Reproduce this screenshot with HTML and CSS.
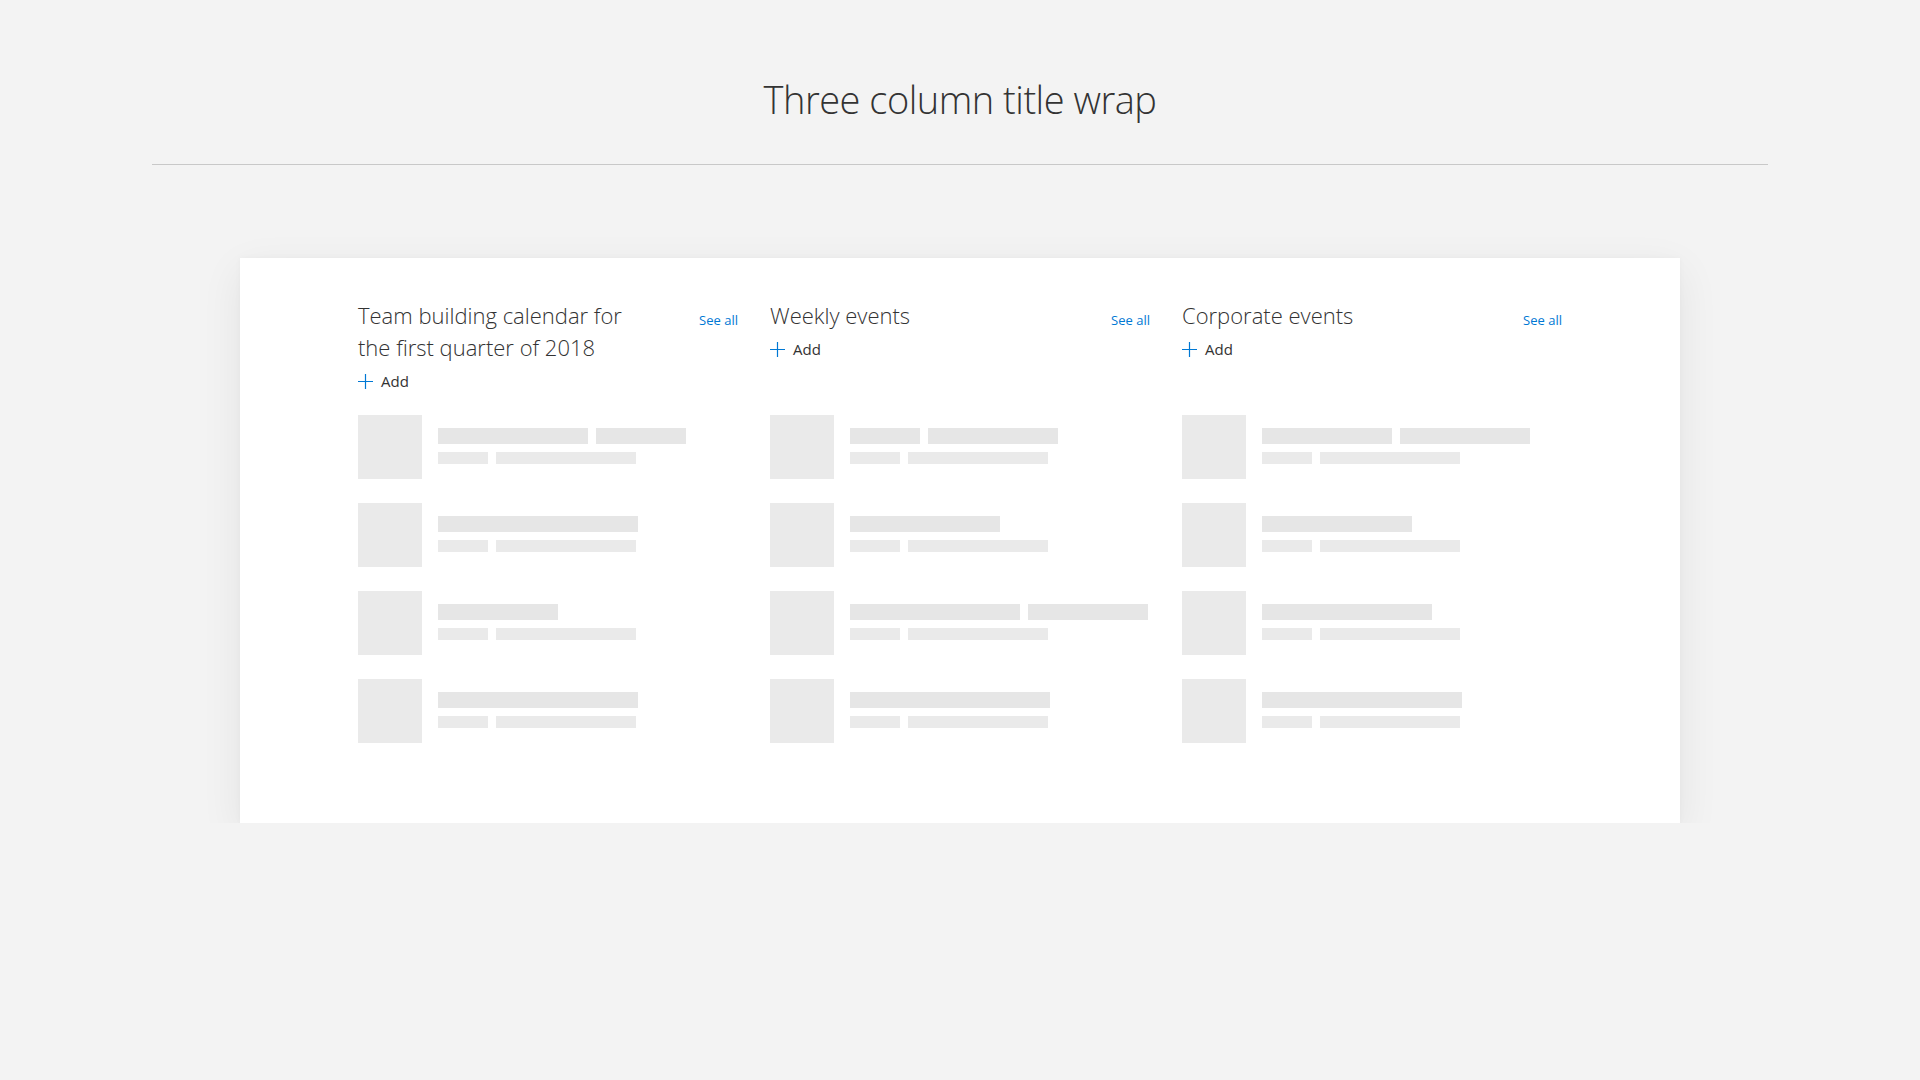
FILE: index.html
```html
<!DOCTYPE html>
<html lang="en">
<head>
<meta charset="utf-8">
<title>Three column title wrap</title>
<link rel="stylesheet" href="styles.css">
</head>
<body>
<div class="page">
  <header class="page-header">
    <h1 class="page-title">Three column title wrap</h1>
  </header>

  <section class="card">
    <div class="col-head">
      <div class="col-title-row">
        <h2 class="col-title">Team building calendar for the first quarter of 2018</h2>
        <a class="see-all" href="#">See all</a>
      </div>
      <button class="add-btn" type="button">
        <svg class="plus" width="15" height="15" viewBox="0 0 15 15"><path d="M7.5 0V15M0 7.5H15" stroke="#0078d4" stroke-width="1.2" fill="none"/></svg>
        <span>Add</span>
      </button>
    </div>
    <div class="col-head">
      <div class="col-title-row">
        <h2 class="col-title">Weekly events</h2>
        <a class="see-all" href="#">See all</a>
      </div>
      <button class="add-btn" type="button">
        <svg class="plus" width="15" height="15" viewBox="0 0 15 15"><path d="M7.5 0V15M0 7.5H15" stroke="#0078d4" stroke-width="1.2" fill="none"/></svg>
        <span>Add</span>
      </button>
    </div>
    <div class="col-head">
      <div class="col-title-row">
        <h2 class="col-title">Corporate events</h2>
        <a class="see-all" href="#">See all</a>
      </div>
      <button class="add-btn" type="button">
        <svg class="plus" width="15" height="15" viewBox="0 0 15 15"><path d="M7.5 0V15M0 7.5H15" stroke="#0078d4" stroke-width="1.2" fill="none"/></svg>
        <span>Add</span>
      </button>
    </div>

    <ul class="items">
      <li class="item"><div class="thumb"></div><div class="lines"><div class="line l1"><i style="width:150px"></i><i style="width:90px"></i></div><div class="line l2"><i style="width:50px"></i><i style="width:140px"></i></div></div></li>
      <li class="item"><div class="thumb"></div><div class="lines"><div class="line l1"><i style="width:200px"></i></div><div class="line l2"><i style="width:50px"></i><i style="width:140px"></i></div></div></li>
      <li class="item"><div class="thumb"></div><div class="lines"><div class="line l1"><i style="width:120px"></i></div><div class="line l2"><i style="width:50px"></i><i style="width:140px"></i></div></div></li>
      <li class="item"><div class="thumb"></div><div class="lines"><div class="line l1"><i style="width:200px"></i></div><div class="line l2"><i style="width:50px"></i><i style="width:140px"></i></div></div></li>
    </ul>
    <ul class="items">
      <li class="item"><div class="thumb"></div><div class="lines"><div class="line l1"><i style="width:70px"></i><i style="width:130px"></i></div><div class="line l2"><i style="width:50px"></i><i style="width:140px"></i></div></div></li>
      <li class="item"><div class="thumb"></div><div class="lines"><div class="line l1"><i style="width:150px"></i></div><div class="line l2"><i style="width:50px"></i><i style="width:140px"></i></div></div></li>
      <li class="item"><div class="thumb"></div><div class="lines"><div class="line l1"><i style="width:170px"></i><i style="width:120px"></i></div><div class="line l2"><i style="width:50px"></i><i style="width:140px"></i></div></div></li>
      <li class="item"><div class="thumb"></div><div class="lines"><div class="line l1"><i style="width:200px"></i></div><div class="line l2"><i style="width:50px"></i><i style="width:140px"></i></div></div></li>
    </ul>
    <ul class="items">
      <li class="item"><div class="thumb"></div><div class="lines"><div class="line l1"><i style="width:130px"></i><i style="width:130px"></i></div><div class="line l2"><i style="width:50px"></i><i style="width:140px"></i></div></div></li>
      <li class="item"><div class="thumb"></div><div class="lines"><div class="line l1"><i style="width:150px"></i></div><div class="line l2"><i style="width:50px"></i><i style="width:140px"></i></div></div></li>
      <li class="item"><div class="thumb"></div><div class="lines"><div class="line l1"><i style="width:170px"></i></div><div class="line l2"><i style="width:50px"></i><i style="width:140px"></i></div></div></li>
      <li class="item"><div class="thumb"></div><div class="lines"><div class="line l1"><i style="width:200px"></i></div><div class="line l2"><i style="width:50px"></i><i style="width:140px"></i></div></div></li>
    </ul>
  </section>
</div>
</body>
</html>
```

FILE: styles.css
```css
* { box-sizing: border-box; }
html, body { margin: 0; padding: 0; }
body {
  background: #f3f3f3;
  font-family: "Open Sans", "Noto Sans", "Liberation Sans", sans-serif;
  color: #333333;
}
.page { width: 1616px; margin: 0 auto; }
.page-header {
  padding-top: 71px;
  padding-bottom: 37px;
  border-bottom: 1px solid #c8c8c8;
  text-align: center;
}
.page-title {
  margin: 0;
  font-size: 38px;
  letter-spacing: -0.5px;
  font-weight: 300;
  line-height: 56px;
  color: #333333;
}
.card {
  width: 1440px;
  margin: 93px auto 0;
  background: #ffffff;
  padding: 41px 118px 80px;
  display: grid;
  grid-template-columns: repeat(3, 380px);
  column-gap: 32px;
  box-shadow: 0 0 6px rgba(0,0,0,0.03), 0 12px 40px rgba(0,0,0,0.07);
}
.col-head { display: flex; flex-direction: column; align-items: flex-start; }
.col-title-row { display: flex; width: 100%; align-items: flex-start; justify-content: space-between; }
.col-title {
  margin: 0;
  width: 290px;
  font-size: 22px;
  font-weight: 300;
  line-height: 32px;
  color: #333333;
}
.see-all {
  margin-top: 11px;
  font-size: 13px;
  line-height: 20px;
  color: #0078d4;
  text-decoration: none;
}
.add-btn {
  display: flex;
  align-items: center;
  gap: 8px;
  padding: 0;
  border: 0;
  background: none;
  height: 36px;
  font-family: inherit;
  font-size: 15px;
  color: #333333;
}
.plus { display: block; }
.items {
  list-style: none;
  margin: 16px 0 0;
  padding: 0;
  display: flex;
  flex-direction: column;
  gap: 24px;
}
.item { display: flex; gap: 16px; }
.thumb { width: 64px; height: 64px; background: #eaeaea; flex: none; }
.lines { padding-top: 13px; display: flex; flex-direction: column; gap: 8px; }
.line { display: flex; gap: 8px; }
.line i { display: block; }
.l1 i { height: 16px; background: #e6e6e6; }
.l2 i { height: 12px; background: #eaeaea; }
```
